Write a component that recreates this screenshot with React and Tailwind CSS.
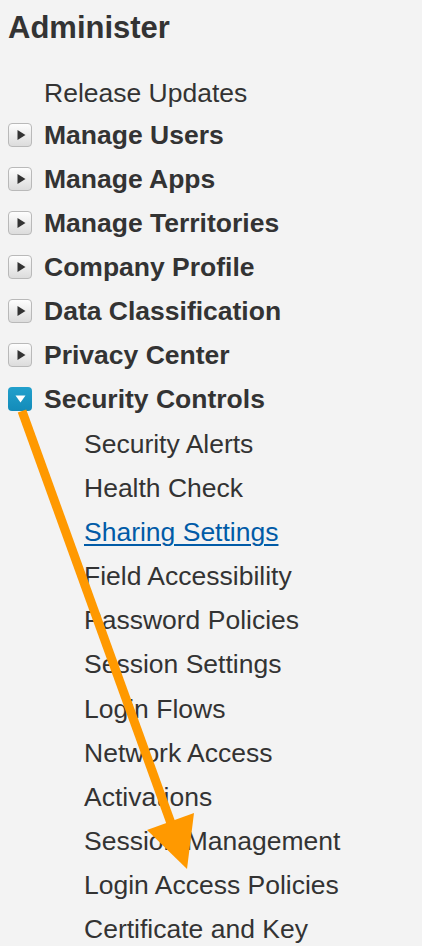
import { useState } from 'react';

const groups = [
  'Manage Users',
  'Manage Apps',
  'Manage Territories',
  'Company Profile',
  'Data Classification',
  'Privacy Center',
];

const securityItems = [
  'Security Alerts',
  'Health Check',
  'Sharing Settings',
  'Field Accessibility',
  'Password Policies',
  'Session Settings',
  'Login Flows',
  'Network Access',
  'Activations',
  'Session Management',
  'Login Access Policies',
  'Certificate and Key',
];

function Twisty({ open }) {
  if (open) {
    return (
      <span className="w-[24px] h-[24px] rounded-[4px] bg-[linear-gradient(#22a0cc,#138bb9)] flex items-center justify-center">
        <svg width="11" height="8" viewBox="0 0 11 8">
          <path d="M0.5 0.5h10L5.5 7.5z" fill="#ffffff" />
        </svg>
      </span>
    );
  }
  return (
    <span className="w-[24px] h-[24px] rounded-[4px] bg-[linear-gradient(#fdfdfd,#dcdcdc)] border border-[#b9b9b9] flex items-center justify-center">
      <svg width="9" height="10" viewBox="0 0 9 10" className="ml-[2px]">
        <path d="M0.5 0v10L8.5 5z" fill="#333333" />
      </svg>
    </span>
  );
}

export default function App() {
  const [active] = useState('Sharing Settings');

  return (
    <div className="relative w-[422px] h-[946px] overflow-hidden bg-[#f3f3f3] text-[#333333] font-['Liberation_Sans',Arial,sans-serif]">
      <h1 className="pt-[10px] pl-[8px] text-[31px] leading-[36px] font-bold">Administer</h1>

      <div className="mt-[25px]">
        <div className="h-[42px] leading-[44px] pl-[44px] text-[26.5px]">Release Updates</div>

        {groups.map((g) => (
          <div key={g} className="h-[44px] flex items-center pl-[8px] gap-[12px]">
            <Twisty />
            <span className="text-[26.5px] leading-[44px] font-bold">{g}</span>
          </div>
        ))}

        <div className="h-[44px] flex items-center pl-[8px] gap-[12px]">
          <Twisty open />
          <span className="text-[26.5px] leading-[44px] font-bold">Security Controls</span>
        </div>

        <ul className="pl-[84px] pt-[1px]">
          {securityItems.map((s) => (
            <li key={s} className="h-[44.1px] leading-[44px] text-[26.5px]">
              {s === active ? (
                <a href="#" className="text-[#015ba7] underline underline-offset-[3px] decoration-[1.5px]">{s}</a>
              ) : (
                s
              )}
            </li>
          ))}
        </ul>
      </div>

      {/* annotation arrow */}
      <svg className="absolute inset-0 pointer-events-none" width="422" height="946" viewBox="0 0 422 946">
        <line x1="22" y1="411" x2="172" y2="826" stroke="#ff9900" strokeWidth="9" />
        <polygon points="147,830 194,813 187,869" fill="#ff9900" />
      </svg>
    </div>
  );
}
